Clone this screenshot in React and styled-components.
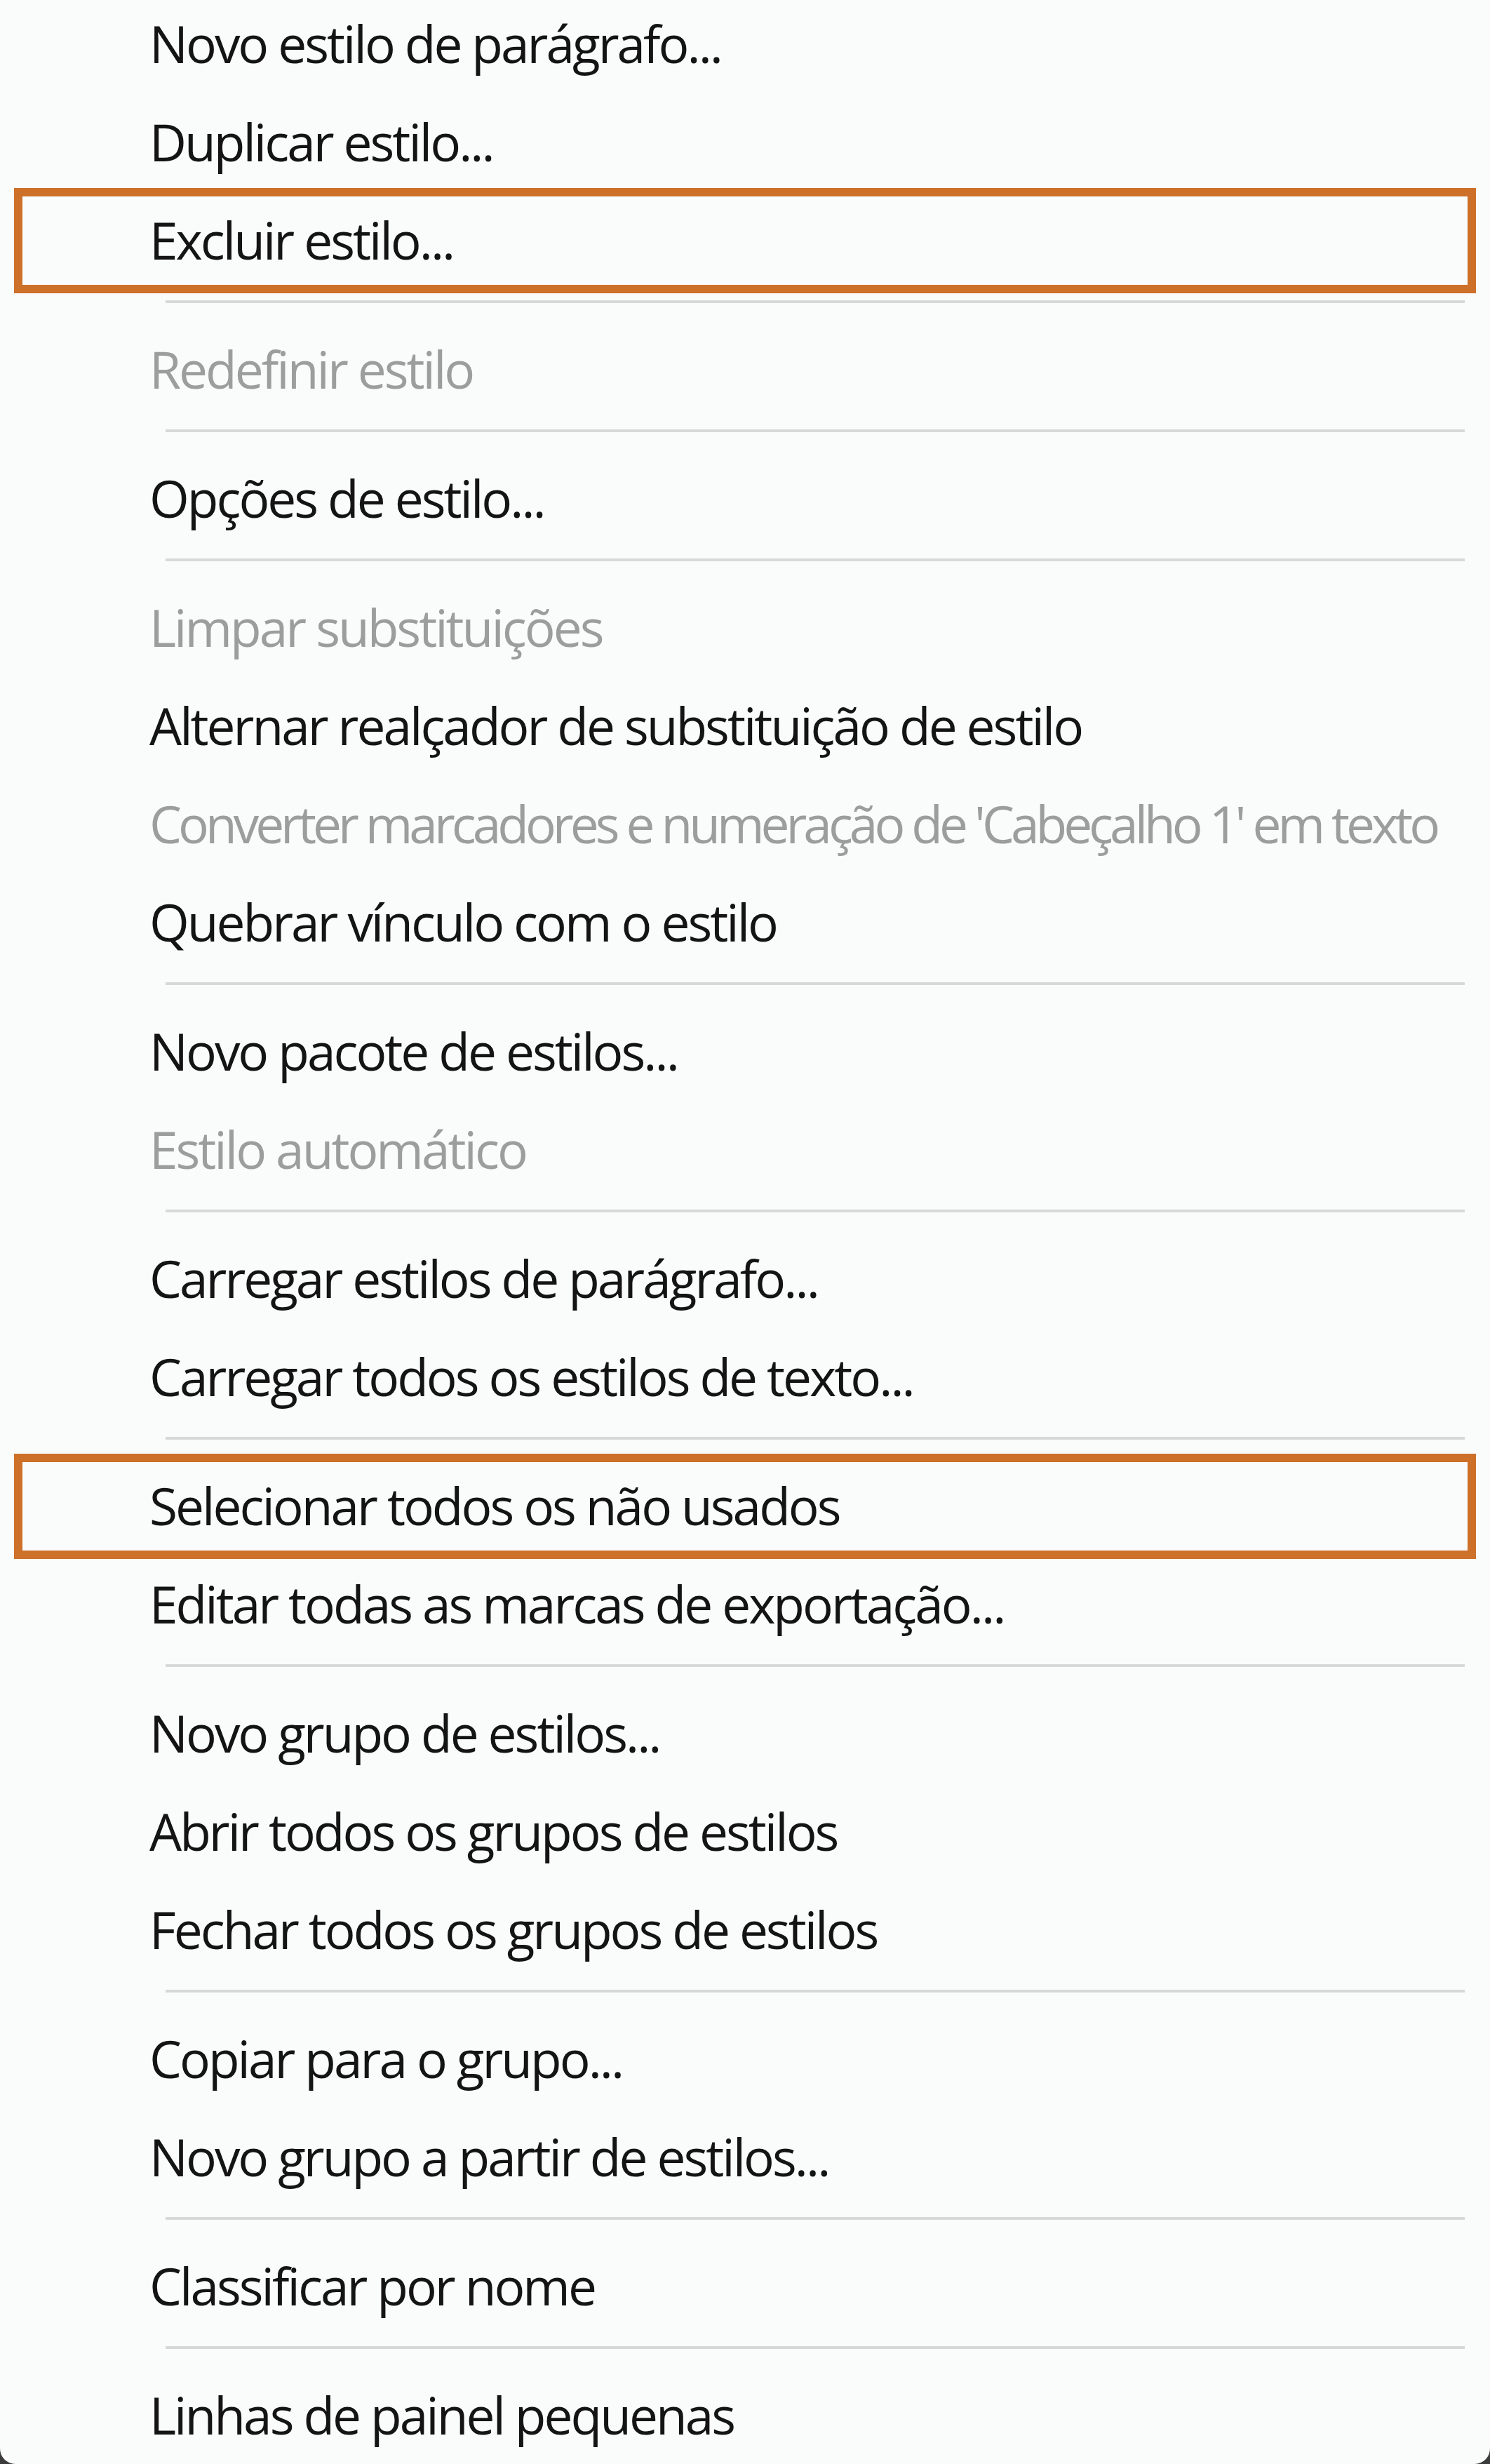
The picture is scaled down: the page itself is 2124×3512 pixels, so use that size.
import React from 'react';
import styled, { createGlobalStyle } from 'styled-components';

const GlobalStyle = createGlobalStyle`
    html, body {
        margin: 0;
        padding: 0;
        background: #3c3c3c;
    }
    #root {
        width: 2124px;
        height: 3512px;
        overflow: hidden;
    }
`;

const MenuWrapper = styled.div`
    width: 2124px;
    height: 3512px;
    overflow: hidden;
    background: #fafbfb;
    border-radius: 0 0 22px 22px;
    box-sizing: border-box;
`;

const MenuList = styled.div`
    display: flex;
    flex-direction: column;
    margin-top: -7px;
`;

const MenuItem = styled.div`
    position: relative;
    height: 140px;
    display: flex;
    align-items: center;
    padding-left: 213px;
    padding-bottom: 4px;
    box-sizing: border-box;
    font-family: "Open Sans", "Noto Sans", sans-serif;
    font-size: 73px;
    font-weight: 400;
    letter-spacing: ${props => (props.$tight ? '-5px' : '-3px')};
    color: ${props => (props.$disabled ? '#9c9d9d' : '#141414')};
    white-space: nowrap;

    ${props => props.$highlight && `
        &::after {
            content: '';
            position: absolute;
            top: -5px;
            bottom: -5px;
            left: 20px;
            right: 20px;
            border: 12px solid #cd7029;
            pointer-events: none;
        }
    `}
`;

const Separator = styled.div`
    height: 44px;
    display: flex;
    align-items: flex-start;
    padding: 15px 36px 0 236px;
    box-sizing: border-box;

    &::before {
        content: '';
        flex: 1;
        height: 4px;
        background: #d7d9d8;
    }
`;

const items = [
    { label: 'Novo estilo de parágrafo...' },
    { label: 'Duplicar estilo...' },
    { label: 'Excluir estilo...', highlight: true },
    'sep',
    { label: 'Redefinir estilo', disabled: true },
    'sep',
    { label: 'Opções de estilo...' },
    'sep',
    { label: 'Limpar substituições', disabled: true },
    { label: 'Alternar realçador de substituição de estilo' },
    { label: "Converter marcadores e numeração de 'Cabeçalho 1' em texto", disabled: true, tight: true },
    { label: 'Quebrar vínculo com o estilo' },
    'sep',
    { label: 'Novo pacote de estilos...' },
    { label: 'Estilo automático', disabled: true },
    'sep',
    { label: 'Carregar estilos de parágrafo...' },
    { label: 'Carregar todos os estilos de texto...' },
    'sep',
    { label: 'Selecionar todos os não usados', highlight: true },
    { label: 'Editar todas as marcas de exportação...' },
    'sep',
    { label: 'Novo grupo de estilos...' },
    { label: 'Abrir todos os grupos de estilos' },
    { label: 'Fechar todos os grupos de estilos' },
    'sep',
    { label: 'Copiar para o grupo...' },
    { label: 'Novo grupo a partir de estilos...' },
    'sep',
    { label: 'Classificar por nome' },
    'sep',
    { label: 'Linhas de painel pequenas' },
];

const App = () => {
    return (
        <>
            <GlobalStyle />
            <MenuWrapper>
                <MenuList>
                    {items.map((item, i) =>
                        item === 'sep' ? (
                            <Separator key={i} />
                        ) : (
                            <MenuItem
                                key={i}
                                $disabled={item.disabled}
                                $highlight={item.highlight}
                                $tight={item.tight}
                            >
                                {item.label}
                            </MenuItem>
                        )
                    )}
                </MenuList>
            </MenuWrapper>
        </>
    );
};

export default App;
